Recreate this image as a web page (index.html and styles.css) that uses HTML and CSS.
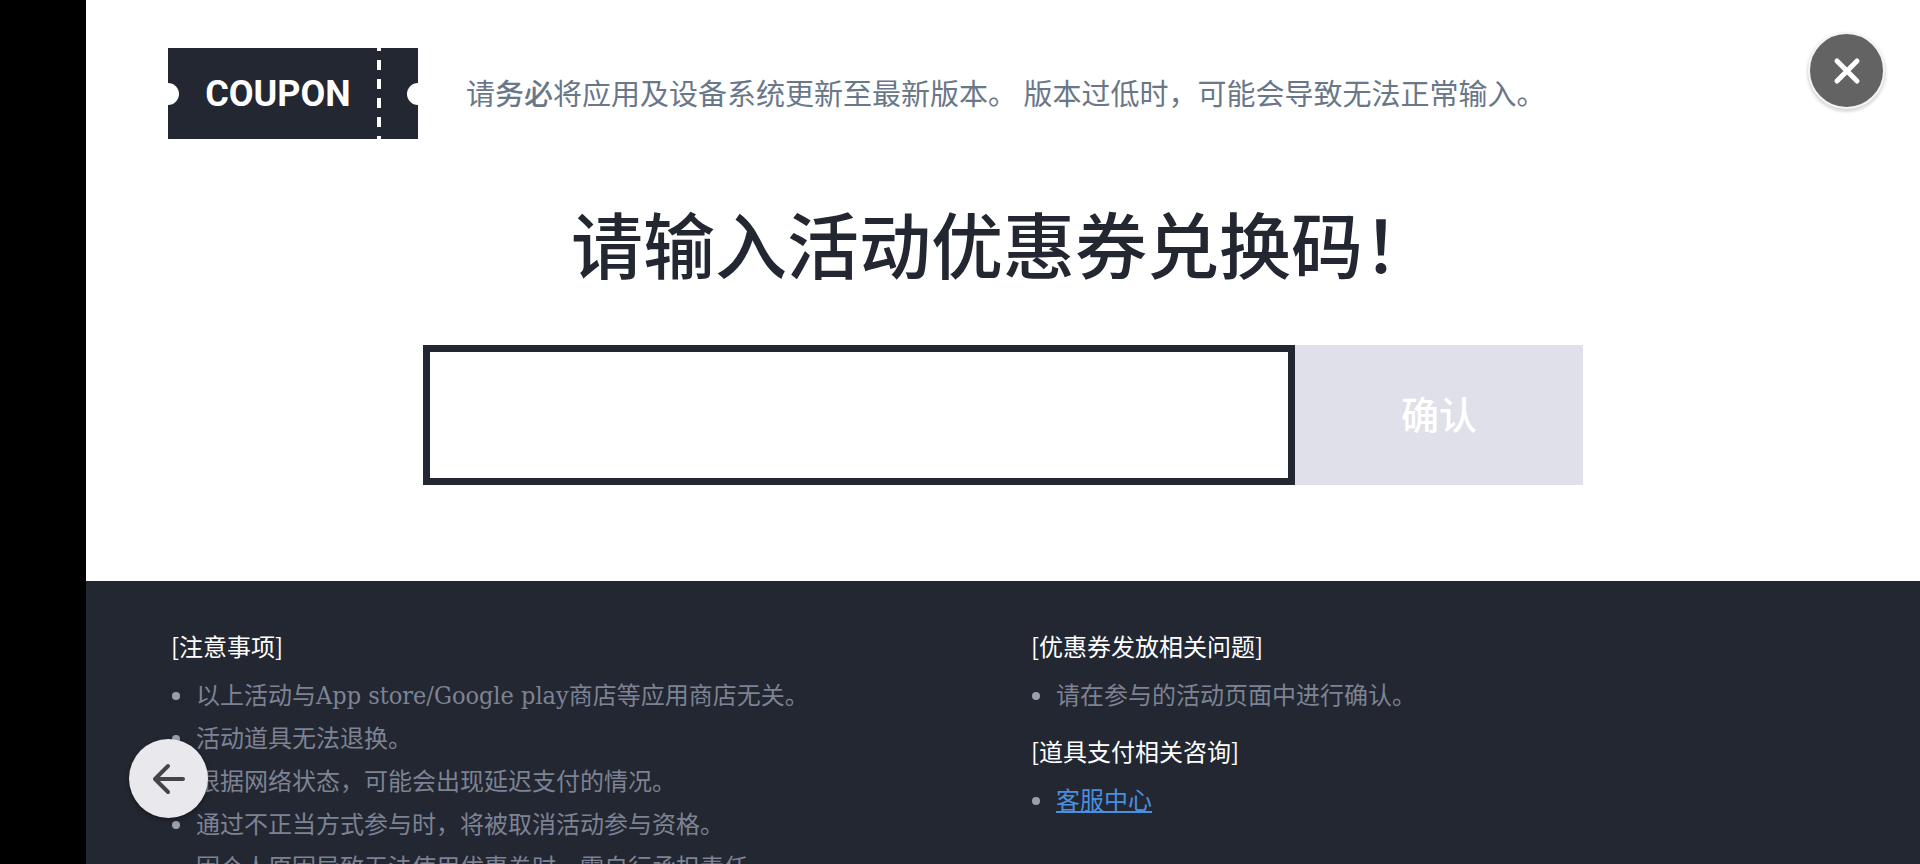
FILE: index.html
```html
<!DOCTYPE html>
<html lang="zh-CN">
<head>
    <meta charset="UTF-8">
    <meta name="viewport" content="width=device-width, initial-scale=1.0">
    <title>优惠券兑换</title>
    <link rel="stylesheet" href="styles.css">
</head>
<body>
    <main class="coupon">
        <header class="top">
            <svg class="ticket" viewBox="0 0 250 91" role="img" aria-label="COUPON">
                <rect width="250" height="91" fill="#222731"/>
                <circle cx="0" cy="46" r="11" fill="#fff"/>
                <circle cx="250" cy="46" r="11" fill="#fff"/>
                <path d="M211 0V91" stroke="#fff" stroke-width="4" stroke-dasharray="10 9" stroke-dashoffset="7"/>
                <text class="ticket-text" x="110" y="58" text-anchor="middle">COUPON</text>
            </svg>
            <p class="notice">请<strong>务必</strong>将应用及设备系统更新至最新版本。 版本过低时，可能会导致无法正常输入。</p>
        </header>

        <h1><label for="code">请输入活动优惠券兑换码！</label></h1>

        <form class="code-form">
            <input type="text" id="code" name="code" autocomplete="off">
            <button type="submit" class="submit" disabled>确认</button>
        </form>
    </main>

    <footer class="info">
        <section>
            <h2>[注意事项]</h2>
            <ul>
                <li>以上活动与<span class="latin">App store/Google play</span>商店等应用商店无关。</li>
                <li>活动道具无法退换。</li>
                <li>根据网络状态，可能会出现延迟支付的情况。</li>
                <li>通过不正当方式参与时，将被取消活动参与资格。</li>
                <li>因个人原因导致无法使用优惠券时，需自行承担责任。</li>
            </ul>
        </section>
        <section>
            <h2>[优惠券发放相关问题]</h2>
            <ul>
                <li>请在参与的活动页面中进行确认。</li>
            </ul>
            <h2>[道具支付相关咨询]</h2>
            <ul>
                <li><a href="#">客服中心</a></li>
            </ul>
        </section>
    </footer>

    <button type="button" class="close" aria-label="关闭">
        <svg width="30" height="30" viewBox="0 0 30 30">
            <path d="M5 5L25 25M25 5L5 25" fill="none" stroke="#fff" stroke-width="5" stroke-linecap="round"/>
        </svg>
    </button>
    <button type="button" class="back" aria-label="返回">
        <svg width="36" height="36" viewBox="0 0 36 36">
            <path d="M32 18H4M17 5L4 18L17 31" fill="none" stroke="#444448" stroke-width="4" stroke-linecap="round" stroke-linejoin="round"/>
        </svg>
    </button>
</body>
</html>
```
FILE: styles.css
```css
* {
    box-sizing: border-box;
}
html {
    scrollbar-width: none;
}
body {
    margin: 0;
    padding-left: 86px;
    background: #000;
    font-family: "Noto Sans CJK SC", sans-serif;
}
button {
    padding: 0;
    border: 0;
    font-family: inherit;
    cursor: pointer;
}
.coupon {
    padding: 48px 82px 96px;
    background: #fff;
}
.top {
    display: flex;
    align-items: center;
    gap: 48px;
}
.ticket {
    flex: none;
    width: 250px;
    height: 91px;
}
.ticket-text {
    fill: #fff;
    font-family: Roboto, sans-serif;
    font-size: 36px;
    font-weight: 700;
}
.notice {
    margin: 0;
    padding-bottom: 4px;
    color: #6a7789;
    font-size: 29px;
    font-weight: 400;
    line-height: 40px;
}
.notice strong {
    font-weight: 500;
}
h1 {
    margin: 51px 0;
    color: #222731;
    font-size: 72px;
    font-weight: 500;
    line-height: 104px;
    text-align: center;
}

/* code input */
.code-form {
    display: flex;
    width: 1160px;
    max-width: 100%;
    height: 140px;
    margin: 0 auto;
}
.code-form input {
    flex: 1;
    min-width: 0;
    padding: 0 32px;
    border: 7px solid #222731;
    border-radius: 0;
    outline: none;
    font-family: inherit;
    font-size: 36px;
}
.submit {
    width: 288px;
    padding-bottom: 6px;
    background: #dfe0e9;
    color: #fff;
    font-size: 38px;
    font-weight: 500;
}

/* notes */
.info {
    display: grid;
    grid-template-columns: 1fr 1fr;
    gap: 50px;
    padding: 43px 82px;
    background: #222731;
    color: #7d8394;
    font-size: 24px;
    line-height: 43px;
}
.info h2 {
    margin: 0 0 5px;
    padding-left: 3px;
    color: #fff;
    font-size: 24px;
    font-weight: 400;
}
.info ul {
    margin: 0 0 14px;
    padding: 0 0 0 28px;
    list-style: none;
}
.info li::before {
    content: "";
    display: inline-block;
    width: 8px;
    height: 8px;
    margin: 0 16px 0 -24px;
    border-radius: 50%;
    background: #9a9fac;
    vertical-align: 4px;
}
.latin {
    font-family: "DejaVu Serif Condensed", "DejaVu Serif", serif;
    font-size: 25px;
    line-height: 1;
}
.info a {
    color: #4a8fe0;
}

/* floating buttons */
.close,
.back {
    position: fixed;
    display: flex;
    align-items: center;
    justify-content: center;
    border-radius: 50%;
}
.close {
    top: 32px;
    right: 35px;
    width: 77px;
    height: 77px;
    border: 2px solid #f4f4f4;
    background: #636363;
    box-shadow: 0 2px 3px 1px rgba(0, 0, 0, 0.15);
}
.back {
    left: 129px;
    bottom: 46px;
    width: 79px;
    height: 79px;
    background: #e8e8ed;
    box-shadow: 0 2px 5px rgba(0, 0, 0, 0.4);
}
```
